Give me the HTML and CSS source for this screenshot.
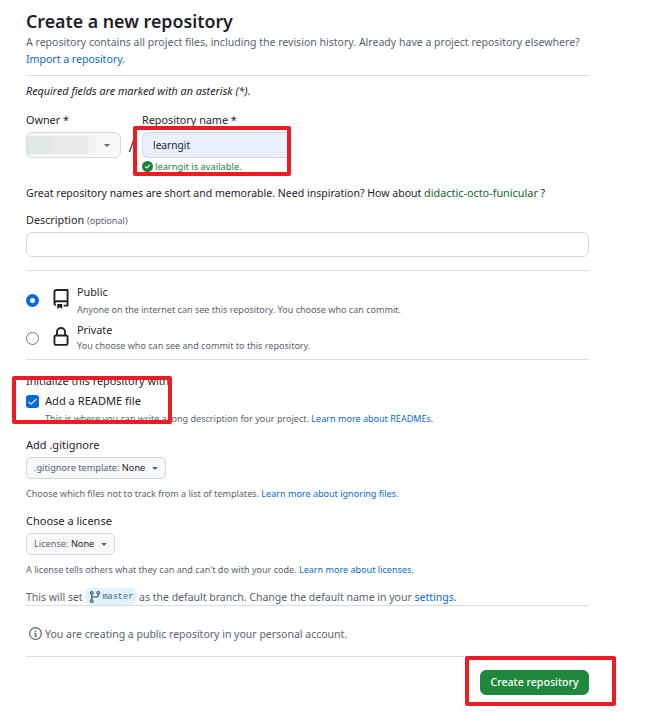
FILE: index.html
```html
<!DOCTYPE html>
<html lang="en">
<head>
<meta charset="utf-8">
<title>Create a new repository</title>
<link rel="stylesheet" href="styles.css">
</head>
<body>
<main class="page">
  <h1 class="title">Create a new repository</h1>
  <p class="lead">A repository contains all project files, including the revision history. Already have a project repository elsewhere?</p>
  <p class="lead import"><a href="#">Import a repository.</a></p>
  <hr class="rule rule-top">
  <p class="required">Required fields are marked with an asterisk (*).</p>

  <div class="name-row">
    <div class="owner">
      <label class="label">Owner *</label>
      <div class="owner-select">
        <span class="owner-blur"></span>
        <span class="caret"></span>
      </div>
    </div>
    <span class="slash">/</span>
    <div class="repo">
      <label class="label">Repository name *</label>
      <div class="repo-input">learngit</div>
      <div class="avail">
        <svg class="avail-icon" viewBox="0 0 16 16" width="11" height="11"><path fill="#1a7f37" d="M8 16A8 8 0 1 1 8 0a8 8 0 0 1 0 16Zm3.78-9.72a.75.75 0 0 0-1.06-1.06L6.75 9.19 5.28 7.72a.75.75 0 0 0-1.06 1.06l2 2a.75.75 0 0 0 1.06 0Z"/></svg>
        <span>learngit is available.</span>
      </div>
    </div>
  </div>

  <p class="great">Great repository names are short and memorable. Need inspiration? How about <span class="sugg">didactic-octo-funicular</span> ?</p>

  <label class="label desc-label">Description <span class="opt">(optional)</span></label>
  <div class="desc-input"></div>
  <hr class="rule rule-vis">

  <div class="vis vis-public">
    <span class="radio radio-on"></span>
    <svg class="vis-icon" viewBox="0 0 16 16"><path fill="#1f2328" d="M2 2.5A2.5 2.5 0 0 1 4.5 0h8.75a.75.75 0 0 1 .75.75v12.5a.75.75 0 0 1-.75.75h-2.5a.75.75 0 0 1 0-1.5h1.75v-2h-8a1 1 0 0 0-.714 1.7.75.75 0 1 1-1.072 1.05A2.495 2.495 0 0 1 2 11.5Zm10.5-1h-8a1 1 0 0 0-1 1v6.708A2.486 2.486 0 0 1 4.5 9h8ZM5 12.25a.25.25 0 0 1 .25-.25h3.5a.25.25 0 0 1 .25.25v3.25a.25.25 0 0 1-.4.2l-1.45-1.087a.249.249 0 0 0-.3 0L5.4 15.7a.25.25 0 0 1-.4-.2Z"/></svg>
    <div class="vis-text">
      <div class="vis-name">Public</div>
      <div class="note">Anyone on the internet can see this repository. You choose who can commit.</div>
    </div>
  </div>
  <div class="vis vis-private">
    <span class="radio"></span>
    <svg class="vis-icon" viewBox="0 0 16 16"><path fill="#1f2328" d="M4 4a4 4 0 0 1 8 0v2h.25c.966 0 1.75.784 1.75 1.75v5.5A1.75 1.75 0 0 1 12.25 15h-8.5A1.75 1.75 0 0 1 2 13.25v-5.5C2 6.784 2.784 6 3.75 6H4Zm8.25 3.5h-8.5a.25.25 0 0 0-.25.25v5.5c0 .138.112.25.25.25h8.5a.25.25 0 0 0 .25-.25v-5.5a.25.25 0 0 0-.25-.25ZM10.5 6V4a2.5 2.5 0 1 0-5 0v2Z"/></svg>
    <div class="vis-text">
      <div class="vis-name">Private</div>
      <div class="note">You choose who can see and commit to this repository.</div>
    </div>
  </div>
  <hr class="rule rule-init">

  <div class="init-title">Initialize this repository with:</div>
  <div class="readme">
    <span class="check"><svg viewBox="0 0 16 16" width="11" height="11"><path fill="#fff" d="M13.78 4.22a.75.75 0 0 1 0 1.06l-7.25 7.25a.75.75 0 0 1-1.06 0L2.22 9.28a.751.751 0 0 1 1.06-1.06L6 10.94l6.72-6.72a.75.75 0 0 1 1.06 0Z"/></svg></span>
    <span class="readme-text">Add a README file</span>
  </div>
  <p class="note readme-note">This is where you can write a long description for your project. <a href="#">Learn more about READMEs.</a></p>

  <label class="label sec-label">Add .gitignore</label>
  <div class="select"><span class="select-key">.gitignore template:</span>&nbsp;<span class="select-val">None</span><span class="caret caret-sm"></span></div>
  <p class="note sel-note">Choose which files not to track from a list of templates. <a href="#">Learn more about ignoring files.</a></p>

  <label class="label sec-label lic-label">Choose a license</label>
  <div class="select"><span class="select-key">License:</span>&nbsp;<span class="select-val">None</span><span class="caret caret-sm"></span></div>
  <p class="note sel-note">A license tells others what they can and can't do with your code. <a href="#">Learn more about licenses.</a></p>

  <p class="branch">This will set <span class="branch-pill"><svg viewBox="0 0 16 16" width="14" height="14"><path fill="#59636e" d="M9.5 3.25a2.25 2.25 0 1 1 3 2.122V6A2.5 2.5 0 0 1 10 8.5H6a1 1 0 0 0-1 1v1.128a2.251 2.251 0 1 1-1.5 0V5.372a2.25 2.25 0 1 1 1.5 0v1.836A2.493 2.493 0 0 1 6 7h4a1 1 0 0 0 1-1v-.628A2.25 2.25 0 0 1 9.5 3.25Zm-6 0a.75.75 0 1 0 1.5 0 .75.75 0 0 0-1.5 0Zm8.25-.75a.75.75 0 1 0 0 1.5.75.75 0 0 0 0-1.5ZM4.25 12a.75.75 0 1 0 0 1.5.75.75 0 0 0 0-1.5Z"/></svg><span class="branch-name">master</span></span> as the default branch. Change the default name in your <a href="#">settings</a>.</p>
  <hr class="rule rule-branch">

  <p class="info"><svg viewBox="0 0 16 16" width="13" height="13"><path fill="#59636e" d="M0 8a8 8 0 1 1 16 0A8 8 0 0 1 0 8Zm8-6.5a6.5 6.5 0 1 0 0 13 6.5 6.5 0 0 0 0-13ZM6.5 7.75A.75.75 0 0 1 7.25 7h1a.75.75 0 0 1 .75.75v2.75h.25a.75.75 0 0 1 0 1.5h-2a.75.75 0 0 1 0-1.5h.25v-2h-.25a.75.75 0 0 1-.75-.75ZM8 6a1 1 0 1 1 0-2 1 1 0 0 1 0 2Z"/></svg><span>You are creating a public repository in your personal account.</span></p>
  <hr class="rule rule-info">

  <div class="actions"><button class="create" type="button">Create repository</button></div>
</main>
<div class="mark mark-name"></div>
<div class="mark mark-readme"></div>
<div class="mark mark-create"></div>
</body>
</html>
```

FILE: styles.css
```css
* { box-sizing: border-box; }
html, body { margin: 0; padding: 0; background: #fff; }
body {
  position: relative;
  height: 713px;
  overflow: hidden;
  font-family: "Noto Sans", "Open Sans", sans-serif;
  color: #1f2328;
  font-size: 11px;
  line-height: 16px;
}
a { color: #0969da; text-decoration: none; }
p { margin: 0; }
.page { width: 563px; margin-left: 26px; padding-top: 9px; display: flex; flex-direction: column; }
.title { margin: 0; font-size: 17.8px; line-height: 25px; font-weight: 600; }
.lead { margin-top: 0; font-size: 10.55px; line-height: 17px; color: #59636e; white-space: nowrap; }
.import { margin-top: 0; }
.rule { width: 100%; height: 1px; margin: 0; border: 0; background: #d8dee4; flex: none; }
.rule-top { margin-top: 7px; }
.required { margin-top: 7px; font-size: 10.8px; font-style: italic; line-height: 16px; }
.label { display: block; font-size: 10.8px; line-height: 16px; }
.name-row { display: flex; margin-top: 13px; height: 60px; }
.owner { width: 95px; }
.owner-select {
  position: relative;
  display: flex; align-items: center; justify-content: flex-end;
  height: 26px; margin-top: 4px; padding-right: 10px;
  border: 1px solid #d1d9e0; border-radius: 6px; background: #f6f8fa;
}
.owner-blur {
  position: absolute; left: 0; top: 3px; width: 69px; height: 18px;
  background: linear-gradient(90deg, #dfe7e7 0 25px, #e9e9e9 25px 61px, #f2f2f2 61px);
}
.caret { width: 0; height: 0; border: 3.5px solid transparent; border-top-color: #59636e; border-bottom: 0; }
.slash { width: 21px; padding-top: 21px; text-align: center; font-size: 16px; line-height: 26px; color: #3d444d; }
.repo { width: 145px; }
.repo-input {
  height: 26px; margin-top: 4px; padding-left: 10px;
  border: 1px solid #d1d9e0; border-right: 0; border-radius: 6px 0 0 6px;
  background: #e8f0fe; font-size: 10.2px; line-height: 24px;
}
.avail { display: flex; align-items: center; gap: 2px; margin-top: 2px; font-size: 9.3px; line-height: 13px; color: #1a7f37; white-space: nowrap; }
.avail-icon { flex: none; }
.great { margin-top: 13px; font-size: 10.55px; line-height: 17px; white-space: nowrap; }
.sugg { color: #116329; font-size: 10.85px; line-height: 1; }
.desc-label { margin-top: 9px; line-height: 17px; }
.opt { font-size: 9.1px; line-height: 1; color: #59636e; }
.desc-input { height: 25px; margin-top: 4px; border: 1px solid #d1d9e0; border-radius: 6px; background: #fff; }
.rule-vis { margin-top: 13px; }
.vis { display: flex; align-items: flex-start; }
.vis-public { margin-top: 13px; height: 38px; }
.vis-private { height: 37px; }
.radio {
  flex: none; width: 13px; height: 13px; margin-top: 9.5px;
  border: 1px solid #6e7781; border-radius: 50%; background: #fff;
}
.radio-on { border: 4px solid #0969da; }
.vis-icon { flex: none; margin: 5px 0 0 11.5px; width: 20px; height: 20px; }
.vis-text { margin-left: 6.5px; }
.vis-name { font-size: 10.8px; line-height: 16px; }
.note { font-size: 9.06px; line-height: 15px; color: #59636e; white-space: nowrap; }
.vis-text .note { margin-top: 2px; }
.vis-private .note { margin-top: 0; }
.rule-init { margin-top: 0; }
.init-title { margin-top: 13px; font-size: 10.8px; line-height: 16px; }
.readme { display: flex; align-items: center; margin-top: 4px; height: 16px; }
.check {
  display: flex; align-items: center; justify-content: center;
  width: 13px; height: 13px; border-radius: 3px; background: #0969da;
}
.readme-text { margin-left: 6px; font-size: 11.1px; }
.readme-note { margin: 2px 0 0 19px; }
.sec-label { margin-top: 11px; font-size: 11px; }
.lic-label { margin-top: 12px; }
.select {
  display: inline-flex; align-items: center; align-self: flex-start;
  height: 22px; margin-top: 4px; padding: 0 7px;
  border: 1px solid #d1d9e0; border-radius: 5px; background: #f6f8fa;
  font-size: 9.2px; line-height: 20px;
}
.select-key { color: #59636e; }
.select-val { color: #1f2328; }
.caret-sm { margin-left: 7px; border-width: 3px; border-bottom: 0; }
.sel-note { margin-top: 7px; }
.branch { display: flex; align-items: center; margin-top: 11px; height: 17px; font-size: 10.5px; color: #59636e; white-space: pre; }
.branch-pill {
  display: inline-flex; align-items: center;
  height: 17px; padding: 0 3px;
  border-radius: 5px; background: #ddf4ff;
}
.branch-name { font-family: "Liberation Mono", monospace; font-size: 8.6px; }
.rule-branch { margin-top: 0; }
.info { display: flex; align-items: center; gap: 3px; margin: 19px 0 0 3px; height: 17px; font-size: 10.5px; color: #59636e; }
.rule-info { margin-top: 14px; }
.actions { display: flex; justify-content: flex-end; margin-top: 13px; }
.create {
  width: 109px; height: 25px; padding: 0;
  border: 1px solid #1f883d; border-radius: 6px; background: #1f883d;
  color: #fff; font: 500 10.6px/23px "Noto Sans", sans-serif;
}
.mark { position: absolute; border: 4px solid #ed1c24; border-radius: 2px; pointer-events: none; }
.mark-name { left: 133px; top: 126px; width: 158px; height: 50px; }
.mark-readme { left: 12px; top: 376px; width: 160px; height: 48px; }
.mark-create { left: 465px; top: 656px; width: 151px; height: 50px; }
```
